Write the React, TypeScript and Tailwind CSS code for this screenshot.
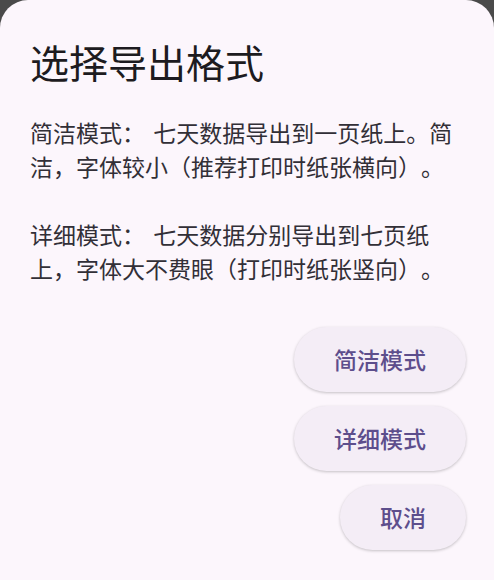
import React from "react";

const font = { fontFamily: '"Noto Sans CJK SC", "Noto Sans", sans-serif' };

const buttons = ["简洁模式", "详细模式", "取消"];

export default function App() {
  return (
    <div className="w-[494px] h-[580px] bg-[#4a4a4a] overflow-hidden [text-spacing-trim:space-all]" style={font}>
      <div className="h-full bg-[#fcf6fc] rounded-t-[28px] pt-[38px] pl-[30px] pr-[30px]">
        <h1 className="text-[39px] leading-[46px] text-[#1d1b20]">选择导出格式</h1>

        <div className="mt-[31px] w-[436px] text-[23px] leading-[34px] text-[#322f37] [word-spacing:3px]">
          <p>简洁模式： 七天数据导出到一页纸上。简洁，字体较小（推荐打印时纸张横向）。</p>
          <p className="mt-[34px]">详细模式： 七天数据分别导出到七页纸上，字体大不费眼（打印时纸张竖向）。</p>
        </div>

        <div className="mt-[42px] mr-[-2px] flex flex-col items-end gap-[14px]">
          {buttons.map((b) => (
            <button
              key={b}
              className="h-[65px] px-[40px] rounded-full bg-[#f4edf6] text-[#5d4e8c] text-[23px] font-medium shadow-[0_1px_3px_rgba(0,0,0,0.22)]"
            >
              {b}
            </button>
          ))}
        </div>
      </div>
    </div>
  );
}
